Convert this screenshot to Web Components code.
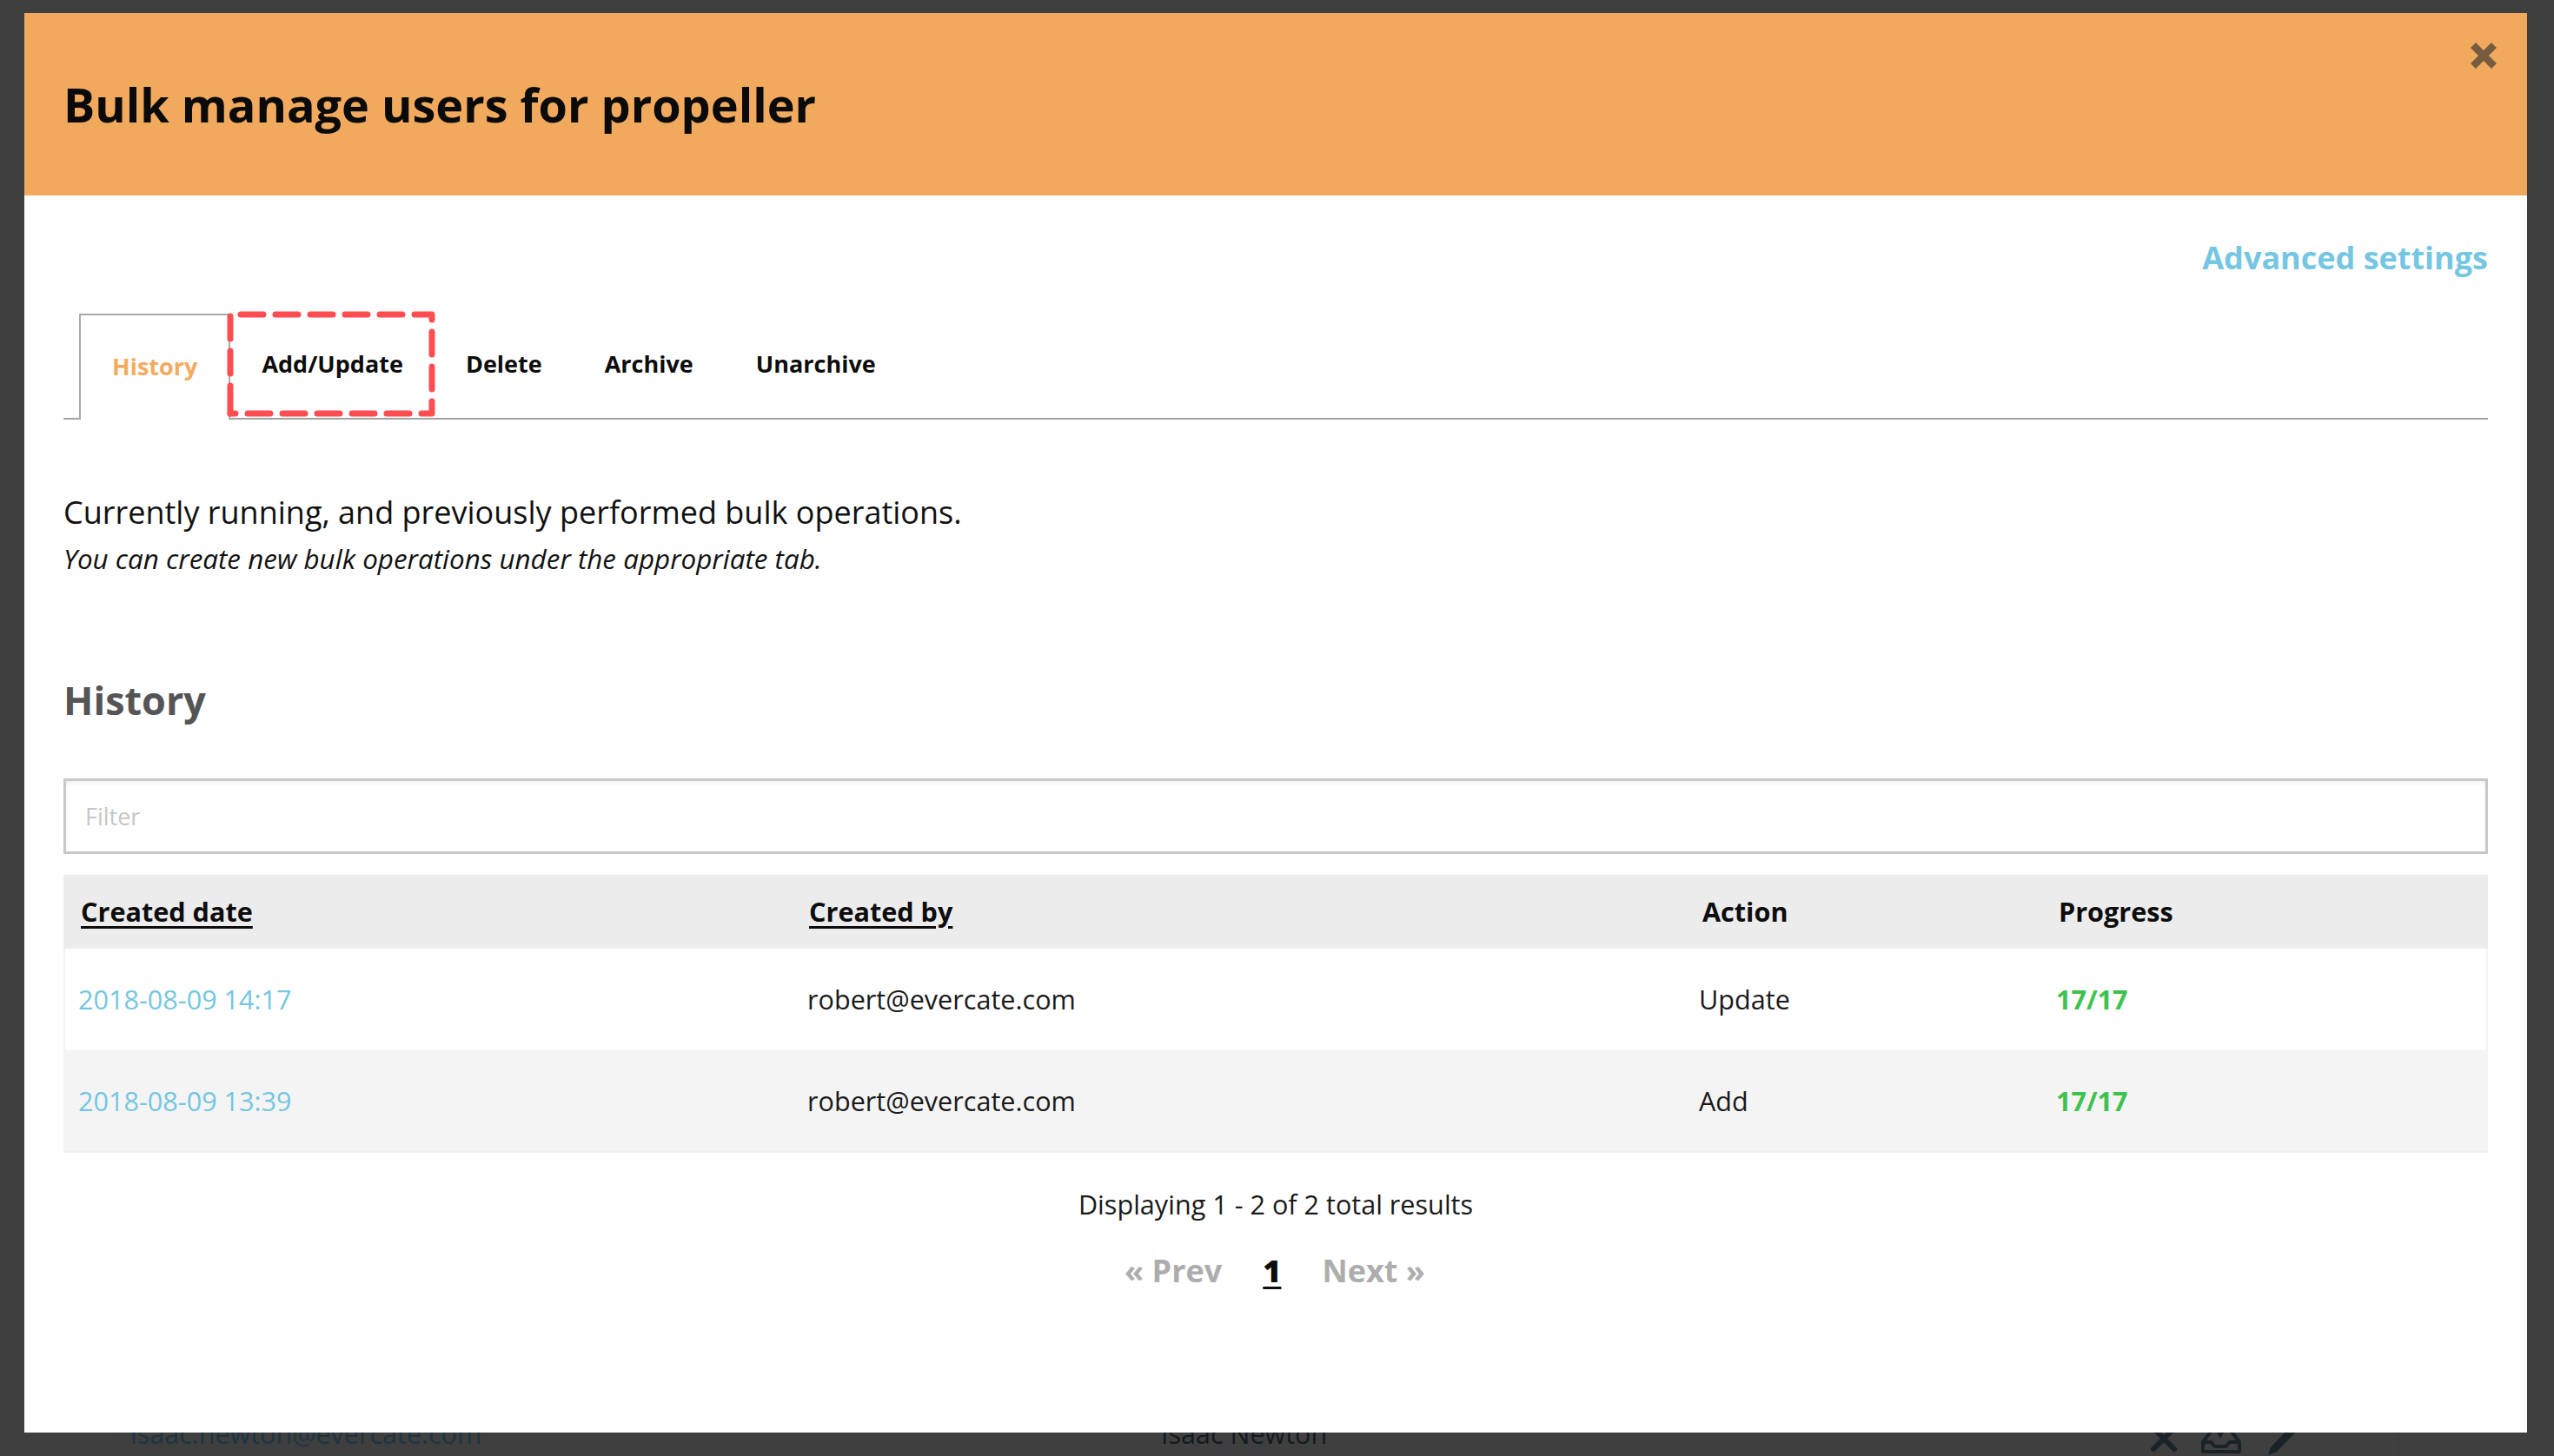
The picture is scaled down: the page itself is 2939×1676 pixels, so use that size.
<!DOCTYPE html>
<html>
<head>
<meta charset="utf-8">
<title>Bulk manage users</title>
<style>
  html, body { margin: 0; height: 100%; }
  body { background: #3f3f3f; font-family: "Open Sans", sans-serif; color: #111; overflow: hidden; }
</style>
</head>
<body>
<behind-row></behind-row>
<bulk-modal>
  <span slot="title">Bulk manage users for propeller</span>
  <a-link slot="advanced">Advanced settings</a-link>
  <tab-bar>
    <tab-item active>History</tab-item>
    <tab-item marked>Add/Update</tab-item>
    <tab-item>Delete</tab-item>
    <tab-item>Archive</tab-item>
    <tab-item>Unarchive</tab-item>
  </tab-bar>
  <intro-text></intro-text>
  <filter-table></filter-table>
  <result-pager></result-pager>
</bulk-modal>

<script>
function define(name, html, init) {
  customElements.define(name, class extends HTMLElement {
    connectedCallback() {
      if (this.shadowRoot) return;
      this.attachShadow({mode: 'open'}).innerHTML = html;
      if (init) init(this);
    }
  });
}

define('behind-row', `
  <style>
    :host { position: absolute; left: 133px; right: 178px; top: 1600px; height: 76px; border: solid #3c3c3c; border-width: 0 1px;
      display: block; overflow: hidden; font-size: 30.5px; }
    .mail { position: absolute; left: 16px; top: 28px; color: #1c3541; line-height: 45px; }
    .name { position: absolute; left: 1202px; top: 28px; color: #141a1d; line-height: 45px; }
    svg { position: absolute; left: 2340px; top: 36px; filter: blur(.5px); }
  </style>
  <span class="mail">isaac.newton@evercate.com</span>
  <span class="name">Isaac Newton</span>
  <svg width="172" height="40" viewBox="0 0 172 40" fill="none" stroke="#1a2327">
    <path d="M4 32 L28 8 M28 32 L4 8" stroke-width="6" stroke-linecap="round"/>
    <path d="M61 24 L70 12 M103 24 L94 12 M61 24 V35 H103 V24 H92 L87 29 H75 L70 24 Z" stroke-width="4" stroke-linejoin="round"/>
    <path d="M75 10 L81 20 L87 10 Z" fill="#1a2327" stroke="none"/>
    <path d="M136 39 L139 30 L160 8 L172 8 L146 35 Z" fill="#1a2327" stroke="none"/>
  </svg>`);

define('bulk-modal', `
  <style>
    :host { position: absolute; left: 28px; top: 15px; width: 2880px; height: 1634px; background: #fff; display: flex; flex-direction: column; }
    header { position: relative; height: 210px; background: #f1aa5d; display: flex; align-items: center; padding-left: 45px; flex: none;
      font-size: 54px; font-weight: 700; color: #0a0a0a; }
    .close { position: absolute; left: 2815px; top: 34px; }
    main { padding: 46px 45px 0; flex: 1; }
    .adv { display: flex; justify-content: flex-end; height: 90px; }
  </style>
  <header>
    <span><slot name="title"></slot></span>
    <svg class="close" width="30" height="30" viewBox="0 0 30 30"><path d="M3 3 L27 27 M27 3 L3 27" stroke="#755c40" stroke-width="8.5"/></svg>
  </header>
  <main>
    <div class="adv"><slot name="advanced"></slot></div>
    <slot></slot>
  </main>`);

define('a-link', `
  <style>
    :host { display: inline-block; color: #75c6e2; font-weight: 700; font-size: 36px; line-height: 52px; }
  </style><slot></slot>`);

define('tab-bar', `
  <style>
    :host { display: flex; height: 120px; padding-left: 18px; border-bottom: 2px solid #a3a3a3; box-sizing: content-box; }
  </style><slot></slot>`);

define('tab-item', `
  <style>
    :host { display: block; position: relative; box-sizing: border-box; height: 120px; padding: 0 36px; line-height: 116px;
      font-size: 27px; font-weight: 700; color: #0d0d0d; }
    :host([active]) { height: 122px; padding: 0 36px; line-height: 118px; color: #f2ab5e; background: #fff; border: solid #a9a9a9; border-width: 2px 2px 0 2px; margin-bottom: -2px; z-index: 1; }
    svg { display: none; position: absolute; left: 0; top: 1px; overflow: visible; z-index: 2; }
    :host([marked]) svg { display: block; }
  </style>
  <slot></slot>
  <svg width="232" height="114" viewBox="0 0 232 114" fill="none" stroke="#ff4d52" stroke-width="7" stroke-linecap="round" stroke-linejoin="round">
    <path d="M0 0 H232 V114 H0" stroke-dasharray="26 14" stroke-dashoffset="-12"/>
    <path d="M0 114 V0" stroke-dasharray="32 14 26 14 26 40"/>
  </svg>`);

define('intro-text', `
  <style>
    :host { display: block; padding-top: 82px; }
    p { margin: 0; font-size: 36px; line-height: 50px; color: #111; }
    em { display: block; font-size: 31.4px; line-height: 42px; margin-top: 7px; color: #111; }
    h2 { margin: 110px 0 0; font-size: 45px; line-height: 64px; font-weight: 700; color: #555; }
  </style>
  <p>Currently running, and previously performed bulk operations.</p>
  <em>You can create new bulk operations under the appropriate tab.</em>
  <h2>History</h2>`);

define('filter-table', `
  <style>
    :host { display: block; margin-top: 58px; }
    .filter { box-sizing: border-box; height: 87px; border: 3px solid #c8c8c8; box-shadow: inset 0 3px 4px rgba(0,0,0,.05); padding-left: 22px;
      font-size: 27px; line-height: 81px; color: #c6c6c6; }
    .table { margin-top: 24px; display: grid; grid-template-columns: 838px 1026px 410px 516px; }
    .h, .c { display: flex; align-items: center; box-sizing: border-box; padding: 0 0 2px 18px; font-size: 30.6px; }
    .h { height: 85px; background: #ececec; padding-left: 20px; font-weight: 700; color: #0d0d0d; }
    .h u { text-decoration-thickness: 3px; text-underline-offset: 5px; }
    .h.r { padding-left: 22px; }
    .c { height: 117px; color: #1a1a1a; }
    .alt { background: #f4f4f4; height: 118px; border-bottom: 2px solid #efefef; padding-bottom: 0; }
    .first { box-shadow: inset 2px 0 #f4f4f4; }
    .last { box-shadow: inset -2px 0 #f4f4f4; }
    .link { color: #75c6e2; padding-left: 17px; }
    .ok { color: #3dc24e; font-weight: 700; padding-left: 19px; }
  </style>
  <div class="filter">Filter</div>
  <div class="table">
    <div class="h"><u>Created date</u></div>
    <div class="h"><u>Created by</u></div>
    <div class="h r">Action</div>
    <div class="h r">Progress</div>
    <div class="c link first">2018-08-09 14:17</div>
    <div class="c">robert@evercate.com</div>
    <div class="c">Update</div>
    <div class="c ok last">17/17</div>
    <div class="c alt link">2018-08-09 13:39</div>
    <div class="c alt">robert@evercate.com</div>
    <div class="c alt">Add</div>
    <div class="c alt ok">17/17</div>
  </div>`);

define('result-pager', `
  <style>
    :host { display: block; text-align: center; padding-top: 37px; }
    .count { font-size: 30.6px; line-height: 44px; color: #1a1a1a; }
    nav { display: flex; justify-content: center; gap: 47px; margin-top: 29px; font-size: 36px; font-weight: 700; line-height: 52px; color: #adadad; position: relative; left: -1px; }
    b { color: #0d0d0d; text-decoration: underline; text-decoration-thickness: 3px; text-underline-offset: 5px; }
  </style>
  <div class="count">Displaying 1 - 2 of 2 total results</div>
  <nav><span>« Prev</span><b>1</b><span>Next »</span></nav>`);
</script>
</body>
</html>
